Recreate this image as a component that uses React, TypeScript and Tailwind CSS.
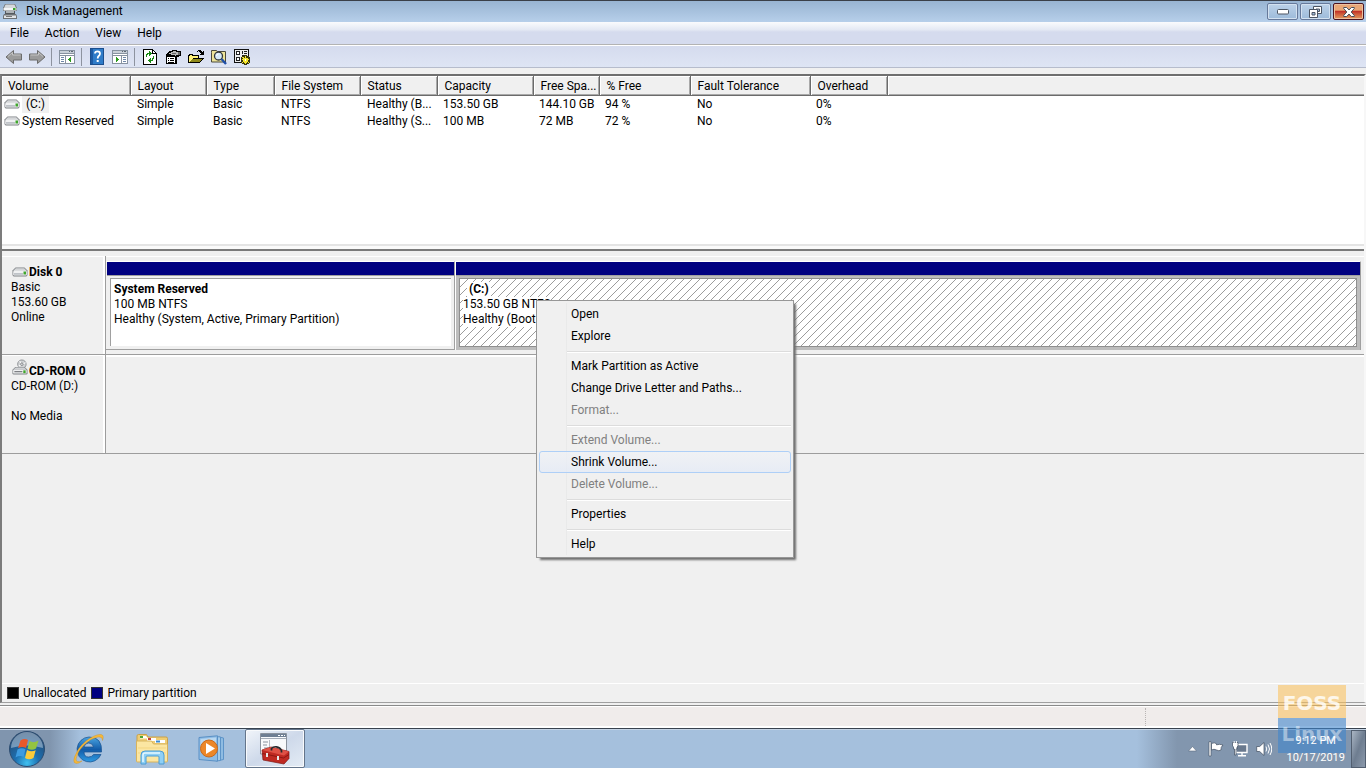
import React from "react";
import clsx from "clsx";

interface Volume {
  name: string;
  layout: string;
  type: string;
  fs: string;
  status: string;
  capacity: string;
  free: string;
  percent: string;
  fault: string;
  overhead: string;
  selected?: boolean;
}

const columns = [
  { title: "Volume", width: "w-[128px]" },
  { title: "Layout", width: "w-[76px]" },
  { title: "Type", width: "w-[68px]" },
  { title: "File System", width: "w-[86px]" },
  { title: "Status", width: "w-[77px]" },
  { title: "Capacity", width: "w-[96px]" },
  { title: "Free Spa...", width: "w-[66px]" },
  { title: "% Free", width: "w-[91px]" },
  { title: "Fault Tolerance", width: "w-[120px]" },
  { title: "Overhead", width: "w-[77px]" },
];

const volumes: Volume[] = [
  {
    name: "(C:)",
    layout: "Simple",
    type: "Basic",
    fs: "NTFS",
    status: "Healthy (B...",
    capacity: "153.50 GB",
    free: "144.10 GB",
    percent: "94 %",
    fault: "No",
    overhead: "0%",
    selected: true,
  },
  {
    name: "System Reserved",
    layout: "Simple",
    type: "Basic",
    fs: "NTFS",
    status: "Healthy (S...",
    capacity: "100 MB",
    free: "72 MB",
    percent: "72 %",
    fault: "No",
    overhead: "0%",
  },
];

const menuGroups = [
  [{ label: "Open" }, { label: "Explore" }],
  [
    { label: "Mark Partition as Active" },
    { label: "Change Drive Letter and Paths..." },
    { label: "Format...", disabled: true },
  ],
  [
    { label: "Extend Volume...", disabled: true },
    { label: "Shrink Volume...", active: true },
    { label: "Delete Volume...", disabled: true },
  ],
  [{ label: "Properties" }],
  [{ label: "Help" }],
];

function DriveIcon() {
  return (
    <svg width="16" height="10" viewBox="0 0 16 10" className="shrink-0">
      <path d="M3.5 .5h9L15.5 3.5v4q0 2-1.500 2H2Q.5 9.500 .5 7.500v-4z" fill="#7f8286" />
      <path d="M3.800 1.200h8.400L14.800 4H1.200z" fill="#d4d6d8" />
      <rect x="1.200" y="3.800" width="13.600" height="4.600" rx="1.200" fill="#f0f1f2" />
      <rect x="2" y="6" width="9" height="1.800" fill="#bfc3c8" />
      <rect x="11.500" y="4.500" width="2.500" height="3" fill="#3fa62c" />
    </svg>
  );
}

function CdRomIcon() {
  return (
    <svg width="16" height="17" viewBox="0 0 17 17" className="shrink-0">
      <circle cx="10.500" cy="5" r="4.500" fill="#d0d2d4" stroke="#8d9093" />
      <path d="M10.500 5 8 1.500M10.500 5l4-1.500M10.500 5 7 7" stroke="#fff" />
      <circle cx="10.500" cy="5" r="1.300" fill="#fff" stroke="#777a7d" />
      <path d="M3.500 8h10l3 3v3.500q0 1.500-1.500 1.500H2q-1.500 0-1.500-1.500V11z" fill="#7f8286" />
      <path d="M4 8.500h9l2.500 2.500H1.300z" fill="#d0d2d4" />
      <rect x="1.200" y="11" width="14.400" height="4" rx="1" fill="#eff0f1" />
      <rect x="2.500" y="12.500" width="8.500" height="1" fill="#55585c" />
      <rect x="12" y="11.500" width="2.500" height="3" fill="#3fa62c" />
    </svg>
  );
}

function AppIcon() {
  return (
    <svg width="16" height="17" viewBox="0 0 16 17" className="shrink-0">
      <path d="M3 1h10l2 4v3H1V5z" fill="#6d7175" />
      <path d="M3.500 1.500h9L14 5H2z" fill="#d6d9dc" />
      <rect x="1.500" y="5" width="13" height="2.500" fill="#f4f5f6" />
      <rect x="11" y="5" width="2.500" height="2" fill="#36a52a" />
      <path d="M3 8h10v3H3z" fill="#55595d" />
      <path d="M4 8h8v2H4z" fill="#aeb3b7" />
      <path d="M2 11h12l1 2v3H1v-3z" fill="#6d7175" />
      <rect x="2" y="12.500" width="12" height="2.500" fill="#e3e5e7" />
      <rect x="4" y="13" width="6" height="1" fill="#777" />
    </svg>
  );
}

function ArrowIcon({ flip }: { flip?: boolean }) {
  return (
    <svg width="18" height="16" viewBox="0 0 18 16" className={clsx(flip && "-scale-x-100")}>
      <path d="M1 8 8.500 1.500V5H16.500v6H8.500v3.500z" fill="#9b9b9b" stroke="#6c6c6c" />
      <path d="M3 7.500 7.500 3.500V6H15.500" fill="none" stroke="#c4c4c4" />
    </svg>
  );
}

// Console window with the tree pane on the left or the action pane on the right
function PaneIcon({ action }: { action?: boolean }) {
  return (
    <svg width="16" height="14" viewBox="0 0 16 14" shapeRendering="crispEdges">
      <path d="M0 0h16v14H0z" fill="#8792a0" />
      <path d="M1 1h14v2H1z" fill="#c9d0d8" />
      <path d="M10 1h1v1h-1zM12 1h2v1h-2z" fill="#5d6874" />
      <path d="M1 4h14v1H1z" fill="#fff" />
      {action ? (
        <>
          <path d="M1 6h8v7H1zM10 6h5v7h-5z" fill="#fff" />
          <path d="M11 7h3v1h-3zM11 9h3v1h-3zM11 11h3v1h-3z" fill="#6f87a8" />
          <path d="M4 7h1v1h1v1h1v1H6v1H5v1H4z" fill="#2c9a1c" />
        </>
      ) : (
        <>
          <path d="M1 6h5v7H1zM7 6h8v7H7z" fill="#fff" />
          <path d="M2 7h3v1H2zM2 9h3v1H2zM2 11h3v1H2z" fill="#6f87a8" />
          <path d="M12 7h-1v1h-1v1H9v1h1v1h1v1h1z" fill="#2c9a1c" />
        </>
      )}
    </svg>
  );
}

function HelpIcon() {
  return (
    <svg width="14" height="17" viewBox="0 0 14 17">
      <rect x=".5" y=".5" width="13" height="16" fill="#2f7cc9" stroke="#1c4f8e" />
      <path d="M1 1h2v15H1z" fill="#1d5ba5" />
      <path d="M5 5.500Q5 3.300 7.500 3.300T10 5.700Q10 7 8.700 8 7.700 8.800 7.700 10.500" fill="none" stroke="#fff" strokeWidth="1.800" />
      <rect x="6.700" y="12" width="2" height="2" fill="#fff" />
    </svg>
  );
}

function RefreshIcon() {
  return (
    <svg width="14" height="16" viewBox="0 0 14 16" shapeRendering="crispEdges">
      <path d="M0 0h10v1h1v1h1v1h1v1h1v12H0z" fill="#000" />
      <path d="M1 1h8v4h4v10H1z" fill="#fff" />
      <path d="M10 2v2h2V3h-1V2z" fill="#fff" />
      <path d="M3 8V5h1V4h2V2h1v1h1v1h1v1H8v1H7v1H6V5H5v1H4v2zM10 7h1v3h-1v2H8v2H7v-1H6v-1H5v-1h1v-1h1V9h1v2h1V9h1z" fill="#178a13" />
    </svg>
  );
}

function PropertiesIcon() {
  return (
    <svg width="16" height="16" viewBox="0 0 16 16" shapeRendering="crispEdges">
      <path d="M1 5h11v10H1z" fill="#000" />
      <path d="M2 8h8v6H2z" fill="#fff" />
      <path d="M3 9h1v1H3zM5 9h4v1H5zM3 11h1v1H3zM5 11h4v1H5zM3 13h6v1H3z" fill="#000" />
      <path d="M1 5h1V4h1V3h1V2h3V1h5v1h4v5h-2v1h-2v1h-1V8H9V7H5V6H1z" fill="#000" />
      <path d="M4 4h2V3h2V2h3v1h2v3h-2v1h-1V6H6V5H4z" fill="#b9b9b9" />
      <path d="M7 4h4v1H7zM13 3h2v3h-2z" fill="#666" />
    </svg>
  );
}

function OpenIcon() {
  return (
    <svg width="16" height="14" viewBox="0 0 16 14" shapeRendering="crispEdges">
      <path d="M9 1h1V0h3v1h1v1h1V1h1v4h-4V4h1V3h-1V2h-1V1h-1v1H9z" fill="#000" />
      <path d="M0 5h1V4h4v1h6v3h5v1h-1v1h-1v1h-1v1h-1v1H0z" fill="#000" />
      <path d="M1 6h1V5h2v1h6v2H5v1H4v1H3v1H2v1H1z" fill="#fff27a" />
      <path d="M5 9h9v1h-1v1h-1v1H2v-1h1v-1h1V9z" fill="#8f8a1c" />
    </svg>
  );
}

function FindIcon() {
  return (
    <svg width="16" height="16" viewBox="0 0 16 16">
      <path d="M.5 3.500V1.500h5l1 1h8v10.500H.5z" fill="#eee49a" stroke="#4b4a3c" />
      <circle cx="7.500" cy="7" r="4" fill="#d5e9f8" stroke="#34383c" strokeWidth="1.300" />
      <path d="M5.500 7q0-2 2-2" fill="none" stroke="#fff" />
      <path d="m10.500 10 4.500 5" stroke="#1f4fa8" strokeWidth="2.400" />
    </svg>
  );
}

function SettingsIcon() {
  return (
    <svg width="16" height="16" viewBox="0 0 16 16" shapeRendering="crispEdges">
      <path d="M0 0h15v14H0z" fill="#111" />
      <path d="M1 1h13v12H1z" fill="#eee" />
      <path d="M2 2h4v4H2zM2 8h4v4H2zM8 2h1v3H8zM10 2h3v1h-3zM10 4h3v1h-3zM8 6h5v1H8z" fill="#222" />
      <path d="M3 3h2v2H3zM3 9h2v2H3z" fill="#fff" />
      <path d="M10 6h3v1h2v1h1v6h-1v1h-2v1h-3v-1H8v-1H7V8h1V7h2z" fill="#3a380a" />
      <path d="M11 7h1v2h2v1h1v1h-1v2h1v1h-1v-1h-1v1h-1v1h-1v-1h-1v-1H9v1H8v-1h1v-2H8v-1h1V9H8V8h2v1h1z" fill="#f5e52c" />
      <path d="M10 9h3v1h1v2h-1v1h-3v-1H9v-2h1z" fill="#f5e52c" />
      <path d="M11 10h1v2h-1z" fill="#fff" />
    </svg>
  );
}

function ToolButton({ label, children }: { label: string; children: React.ReactNode }) {
  return (
    <button type="button" aria-label={label} className="flex h-5 w-[23px] items-center justify-center">
      {children}
    </button>
  );
}

function ToolSeparator() {
  return <span className="mx-[3px] h-[18px] w-px bg-[#8d939f]" />;
}

function TitleBar() {
  const frame = "flex h-[17px] w-[31px] items-center justify-center rounded-[2px] border shadow-[inset_0_0_0_1px_#d3e1f0]";
  return (
    <header className="flex h-[22px] items-center border-t border-[#3a3f48] bg-linear-to-b from-[#98b4d2] to-[#b7cfea] pl-[2px] pr-[2px]">
      <AppIcon />
      <h1 className="ml-2 flex-1 text-[12px]">Disk Management</h1>
      <div className="flex gap-[2px]">
        <button type="button" aria-label="Minimize" className={clsx(frame, "border-[#66799a] bg-linear-to-b from-[#bcd1e8] to-[#9dbbda]")}>
          <svg width="12" height="6" viewBox="0 0 12 6">
            <rect x=".5" y=".5" width="11" height="4.500" rx="1" fill="#fff" stroke="#4c5563" />
          </svg>
        </button>
        <button type="button" aria-label="Restore" className={clsx(frame, "border-[#66799a] bg-linear-to-b from-[#bcd1e8] to-[#9dbbda]")}>
          <svg width="13" height="12" viewBox="0 0 13 12">
            <path d="M4.500.5h8v7h-8z" fill="#fff" stroke="#4c5563" />
            <path d="M7 3h3.500v2.500H7z" fill="#9dbbda" stroke="#4c5563" />
            <path d="M.5 3.500h8v8h-8z" fill="#fff" stroke="#4c5563" />
            <path d="M3 6.500h3v2.500H3z" fill="#9dbbda" stroke="#4c5563" />
          </svg>
        </button>
        <button
          type="button"
          aria-label="Close"
          className="flex h-[17px] w-[31px] items-center justify-center rounded-[2px] border border-[#4b1420] bg-linear-to-b from-[#e8a777] from-40% via-[#c3342a] via-50% to-[#e19a5f] shadow-[inset_0_0_0_1px_#ecc0a0]"
        >
          <svg width="12" height="10" viewBox="0 0 12 10">
            <path d="M.7.5h3L6 3 8.300.5h3v1L8.200 5l3.100 3.500v1h-3L6 7 3.700 9.500h-3v-1L3.800 5 .7 1.500z" fill="#fff" stroke="#4a4f5a" />
          </svg>
        </button>
      </div>
    </header>
  );
}

function MenuBar() {
  return (
    <nav className="flex h-[23px] items-center gap-[16px] border-b border-[#b3b3b3] bg-linear-to-b from-[#fafbfd] from-0% via-[#e4e9f4] via-35% to-[#d5dbee] to-45% pl-[10px]">
      {["File", "Action", "View", "Help"].map((item) => (
        <button key={item} type="button">
          {item}
        </button>
      ))}
    </nav>
  );
}

function Toolbar() {
  return (
    <div className="flex h-[23px] items-center border-b border-t border-b-[#b6bccc] border-t-white bg-linear-to-b from-[#d5dbee] to-[#dee5f4] pl-[2px]">
      <ToolButton label="Back"><ArrowIcon /></ToolButton>
      <ToolButton label="Forward"><ArrowIcon flip /></ToolButton>
      <ToolSeparator />
      <ToolButton label="Show/Hide Console Tree"><PaneIcon /></ToolButton>
      <ToolSeparator />
      <ToolButton label="Help"><HelpIcon /></ToolButton>
      <ToolButton label="Show/Hide Action Pane"><PaneIcon action /></ToolButton>
      <ToolSeparator />
      <ToolButton label="Refresh"><RefreshIcon /></ToolButton>
      <ToolButton label="Properties"><PropertiesIcon /></ToolButton>
      <ToolButton label="Open"><OpenIcon /></ToolButton>
      <ToolButton label="Find"><FindIcon /></ToolButton>
      <ToolButton label="Settings"><SettingsIcon /></ToolButton>
    </div>
  );
}

function VolumeTable() {
  return (
    <section className="h-[168px] bg-white">
      <table className="w-full table-fixed border-collapse text-left">
        <thead>
          <tr className="h-[19px] bg-[#f0f0f0]">
            {columns.map((col, index) => (
              <th
                key={col.title}
                className={clsx(
                  col.width,
                  index === 0 ? "pl-[6px]" : "pl-[7px]",
                  "overflow-hidden whitespace-nowrap border-b border-r border-[#6b6b6b] pt-[2px] font-normal leading-4 shadow-[inset_1px_1px_0_#fff,inset_-1px_-1px_0_#a9a9a9]"
                )}
              >
                {col.title}
              </th>
            ))}
            <td className="border-b border-[#6b6b6b] shadow-[inset_1px_1px_0_#fff,inset_0_-1px_0_#a9a9a9]" />
          </tr>
        </thead>
        <tbody>
          {volumes.map((v) => (
            <tr key={v.name} className="h-[17px] whitespace-nowrap leading-[17px]">
              <td>
                <div className="flex items-center pl-[2px]">
                  <DriveIcon />
                  <span className={clsx("ml-[2px]", v.selected && "bg-[#f0f0f0] px-[4px]")}>{v.name}</span>
                </div>
              </td>
              <td className="pl-[7px]">{v.layout}</td>
              <td className="pl-[7px]">{v.type}</td>
              <td className="pl-[7px]">{v.fs}</td>
              <td className="pl-[7px]">{v.status}</td>
              <td className="pl-[6px]">{v.capacity}</td>
              <td className="pl-[6px]">{v.free}</td>
              <td className="pl-[6px]">{v.percent}</td>
              <td className="pl-[7px]">{v.fault}</td>
              <td className="pl-[6px]">{v.overhead}</td>
              <td />
            </tr>
          ))}
        </tbody>
      </table>
    </section>
  );
}

function DiskLabel({ icon, name, lines }: { icon: React.ReactNode; name: string; lines: string[] }) {
  return (
    <div className="w-[104px] shrink-0 border-b border-r border-[#9d9d9d] pl-[9px] shadow-[inset_-2px_1px_0_#fff]">
      <div className="flex h-[24px] items-end gap-px pl-px">
        <span className="pb-[3px]">{icon}</span>
        <b>{name}</b>
      </div>
      {lines.map((line, index) => (
        <p key={index} className="h-[15px]">
          {line}
        </p>
      ))}
    </div>
  );
}

function Hatch() {
  return (
    <svg className="absolute inset-0 h-full w-full" shapeRendering="crispEdges">
      <defs>
        <pattern id="hatch" width="8" height="8" patternUnits="userSpaceOnUse">
          <path d="M0 7h1v1H0zM1 6h1v1H1zM2 5h1v1H2zM3 4h1v1H3zM4 3h1v1H4zM5 2h1v1H5zM6 1h1v1H6zM7 0h1v1H7z" fill="#9c9c9c" />
        </pattern>
      </defs>
      <rect width="100%" height="100%" fill="url(#hatch)" />
    </svg>
  );
}

function Disks() {
  return (
    <section className="flex-1 bg-[#f0f0f0] pt-[5px]">
      <div className="flex h-[99px]">
        <DiskLabel icon={<DriveIcon />} name="Disk 0" lines={["Basic", "153.60 GB", "Online"]} />
        <div className="flex min-w-0 flex-1 border-b border-[#9d9d9d] pb-[4px] pr-[3px] pt-[5px] shadow-[inset_0_1px_0_#fff]">
          <div className="flex w-[349px] shrink-0 flex-col border-b border-r border-[#a0a0a0] border-t border-t-white">
            <div className="ml-px h-[14px] border-b border-[#a0a0a0] bg-[#000080]" />
            <div className="flex-1 p-[3px] pl-[4px] pt-[2px]">
              <div className="h-full border-l border-t border-[#a0a0a0] bg-white pl-[3px] pt-[3px] leading-[15px]">
                <b className="block">System Reserved</b>
                <p>100 MB NTFS</p>
                <p>Healthy (System, Active, Primary Partition)</p>
              </div>
            </div>
          </div>
          <div className="flex min-w-0 flex-1 flex-col border-l border-r border-t border-l-white border-r-[#a0a0a0] border-t-white">
            <div className="h-[14px] border-b border-[#a0a0a0] bg-[#000080]" />
            <div className="flex-1 bg-[#bdbdbd] p-[3px] pt-[2px]">
              <div className="relative h-full border border-[#8f8f8f] bg-white pl-[3px] pt-[3px] leading-[15px]">
                <Hatch />
                <div className="relative flex flex-col items-start whitespace-nowrap">
                  <b className="ml-[4px] bg-white px-[2px]">(C:)</b>
                  <p className="bg-white">153.50 GB NTFS</p>
                  <p className="bg-white">Healthy (Boot</p>
                </div>
              </div>
            </div>
          </div>
        </div>
      </div>
      <div className="flex h-[99px]">
        <DiskLabel icon={<CdRomIcon />} name="CD-ROM 0" lines={["CD-ROM (D:)", "", "No Media"]} />
        <div className="flex-1 border-b border-[#9d9d9d] shadow-[inset_0_2px_0_#fff]" />
      </div>
    </section>
  );
}

function Legend() {
  return (
    <div className="flex h-[19px] items-center border-t border-white bg-[#f0f0f0] pl-[5px]">
      <span className="mr-1 h-3 w-3 border border-[#333] bg-black" />
      <span className="mr-[5px]">Unallocated</span>
      <span className="mr-1 h-3 w-3 border border-[#333] bg-[#000080]" />
      <span>Primary partition</span>
    </div>
  );
}

function ContextMenu() {
  return (
    <div
      role="menu"
      className="absolute left-[536px] top-[300px] w-[258px] border border-[#979797] bg-[#f0f0f0] p-[2px] shadow-[3px_3px_2px_-1px_#6f6f6f]"
    >
      <div className="bg-linear-to-r from-transparent from-[27px] via-[#e2e3e3] via-[27px] to-transparent to-[28px]">
        {menuGroups.map((group, index) => (
          <div key={index}>
            {index > 0 && <div className="mb-[2px] ml-7 mt-[4px] h-[2px] border-b border-t border-b-white border-t-[#dcdcdc]" />}
            {group.map((item) => (
              <button
                key={item.label}
                type="button"
                role="menuitem"
                disabled={item.disabled}
                className={clsx(
                  "block h-[22px] w-full rounded-[3px] border pl-[31px] text-left",
                  item.active ? "border-[#aecff7] bg-linear-to-b from-[#f0f2f6]/70 to-[#e3eaf7]/70" : "border-transparent",
                  item.disabled && "text-[#808080]"
                )}
              >
                {item.label}
              </button>
            ))}
          </div>
        ))}
      </div>
    </div>
  );
}

function StartOrb() {
  return (
    <svg width="38" height="38" viewBox="0 0 38 38">
      <defs>
        <radialGradient id="orb" cx="50%" cy="90%" r="85%">
          <stop offset="0" stopColor="#3fc0f0" />
          <stop offset=".4" stopColor="#1d6fb0" />
          <stop offset="1" stopColor="#27496f" />
        </radialGradient>
      </defs>
      <circle cx="19" cy="19" r="17.500" fill="url(#orb)" stroke="#2c4c70" />
      <path d="M3 18A16 16 0 0 1 35 18Q19 13 3 18z" fill="#c6d7e8" opacity=".5" />
      <path d="M12.500 10.500q4-2.500 7.500-.5L18 18q-3.500-2-8 0z" fill="#e8582b" />
      <path d="M21.500 11q4 2.500 9-.5L28 18.500q-4 2.500-8.500 0z" fill="#93c440" />
      <path d="M9.500 19.500q4-2.500 8-.3L15.500 27q-3.500-2-8 .5z" fill="#3d9be0" />
      <path d="M19 20q4.500 2.500 8.700.2L25.500 28q-4.500 2.500-8.500 0z" fill="#fccb3a" />
    </svg>
  );
}

function ExplorerEIcon() {
  return (
    <svg width="34" height="34" viewBox="0 0 34 34">
      <defs>
        <linearGradient id="ie" x1="0" y1="0" x2="0" y2="1">
          <stop offset="0" stopColor="#4aa5e2" />
          <stop offset=".5" stopColor="#125ba8" />
          <stop offset="1" stopColor="#2f9be2" />
        </linearGradient>
      </defs>
      <path
        d="M18 5A12.500 12.500 0 1 0 30 22.500H22.500q-1.500 2.500-5 2.500-4.500 0-4.500-5h17.500Q31.500 5 18 5zM13 15q.8-4 4.700-4t4.800 4z"
        fill="url(#ie)"
        stroke="#174f8c"
        strokeWidth=".7"
      />
      <path d="M8 31Q1 33 3.500 25 6.500 16 15 9 24 2 30 2.500q3.500.5 1.500 6 0-4-4.500-3.500-7 1-14 8T5 27q0 4 6 2z" fill="#f4b93c" stroke="#cf8e1f" strokeWidth=".4" />
    </svg>
  );
}

function FolderIcon() {
  return (
    <svg width="34" height="32" viewBox="0 0 34 32">
      <path d="M2 3q0-1.500 1.500-1.500h8L13 4h18q1.500 0 1.500 1.500V27H2z" fill="#efce75" stroke="#c9a14a" />
      <path d="M5 3h6l2 2.500H5z" fill="#fff" />
      <path d="M5 3h3v2H5z" fill="#4aa537" />
      <path d="M12 5h9v3h-9z" fill="#fff" />
      <path d="M13 5h3v2h-3z" fill="#c6413a" />
      <path d="M1.500 8h15l2 3h14v17q0 1-1 1H2.500q-1 0-1-1z" fill="#fbe6a2" stroke="#d7b35d" />
      <path d="M20 7h10v3H20z" fill="#fff" />
      <path d="M21 7.500h4v2h-4z" fill="#3a8bd0" />
      <path d="M3 15h28M3 20h28" stroke="#f3d581" />
      <path d="M6 31V22q0-4 4-4h15q4 0 4 4v9h-5v-7q0-1-1-1H12q-1 0-1 1v7z" fill="#8fd0f5" stroke="#4a9cd4" />
      <path d="M8 29v-7q0-2 2-2h15" fill="none" stroke="#e5f7ff" strokeWidth="1.500" />
    </svg>
  );
}

function PlayerIcon() {
  return (
    <svg width="28" height="28" viewBox="0 0 28 28">
      <path d="m21 2 4.500 1v21.500l-4.500 1z" fill="#8fbce2" stroke="#5d94c8" />
      <path d="m18 1.500 4.500.5v23.500l-4.500.5z" fill="#a4cbea" stroke="#5d94c8" />
      <path d="M1 2.500 19.500.8v25.400L1 24.500z" fill="#8ebce5" stroke="#5a90c5" />
      <path d="M2.500 4 18 2.500V12L2.500 14z" fill="#b9d8f1" />
      <circle cx="11" cy="13.500" r="8.500" fill="#ec8728" stroke="#c9691a" />
      <path d="m8 8 9 5.500L8 19z" fill="#fff" />
    </svg>
  );
}

function ToolboxIcon() {
  return (
    <svg width="32" height="34" viewBox="0 0 32 34">
      <path d="M1.500 1.500h26V22h-26z" fill="#f8f9fb" stroke="#8a929d" />
      <path d="M2 2h25v3H2z" fill="#6f7f93" />
      <path d="M2 6.500h25" stroke="#a5adb8" />
      <path d="M19 3.500h2M22 3.500h2M25 3.500h1" stroke="#fff" />
      <path d="M4 10h5M4 13h4M5 16h4" stroke="#8a929d" />
      <path d="M10.500 8v9" stroke="#b4bac3" />
      <path d="m3 18 9-3 18 4.500v7l-5 5.500L4 28z" fill="#bf2a22" stroke="#801512" strokeWidth=".7" />
      <path d="m3 18 9-3 18 4.500-5 4z" fill="#df5145" />
      <path d="M12.500 18.500v-2q1.500-2 5-1.700t5 3.700v2" fill="none" stroke="#28292c" strokeWidth="1.700" />
      <path d="m3.500 21.500 21 4.500L30 22.500" fill="none" stroke="#8d1712" />
      <path d="M8 21v4M19 24v4" stroke="#e7e7e7" strokeWidth="2" />
    </svg>
  );
}

function Taskbar() {
  return (
    <footer className="flex h-10 items-center border-t border-[#39434f] bg-linear-to-r from-[#8095ae] from-[50px] via-[#a5c0dd] via-[80px] to-[#a5c0dd] shadow-[inset_0_1px_0_#c6d5e6]">
      <button type="button" aria-label="Start" className="flex w-[54px] justify-center"><StartOrb /></button>
      <button type="button" aria-label="Internet Explorer" className="ml-1 flex w-[60px] justify-center"><ExplorerEIcon /></button>
      <button type="button" aria-label="Windows Explorer" className="ml-1 flex w-[60px] justify-center"><FolderIcon /></button>
      <button type="button" aria-label="Media Player" className="flex w-[60px] justify-center"><PlayerIcon /></button>
      <button
        type="button"
        aria-label="Disk Management"
        className="ml-[3px] flex h-[39px] w-[60px] items-center justify-center rounded-[2px] border border-[#64758b] bg-linear-to-br from-[#f1f5fa] via-[#ced9ea] to-[#e4ecf5] shadow-[inset_0_0_0_1px_#f8fafc]"
      >
        <ToolboxIcon />
      </button>
      <div className="ml-auto flex h-[38px] items-center bg-linear-to-r from-[#a5c0dd] to-[#8296ae] to-[40px] pl-[47px]">
        <button type="button" aria-label="Show hidden icons" className="flex w-4 justify-center">
          <svg width="9" height="6" viewBox="0 0 9 6"><path d="M4.500.5 8.500 5H.5z" fill="#fff" stroke="#5d6c80" strokeWidth=".6" /></svg>
        </button>
        <button type="button" aria-label="Action Center" className="ml-2 flex w-4 justify-center">
          <svg width="16" height="16" viewBox="0 0 16 16">
            <path d="M1 .7h2V15H1z" fill="#fff" stroke="#3c4a5d" strokeWidth=".6" />
            <path d="M3.500 2.500q3-1.500 5 .3v1q3-1 6.500.2-2.500 2-2 5-2 1.500-4.500 0Q6 7.500 3.500 9z" fill="#fff" stroke="#3c4a5d" strokeWidth=".7" />
          </svg>
        </button>
        <button type="button" aria-label="Network" className="ml-2 flex w-4 justify-center">
          <svg width="16" height="16" viewBox="0 0 16 16">
            <path d="M4 3.500h11v8H4z" fill="#69798e" stroke="#fff" strokeWidth="1.400" />
            <path d="M10 12v2.500M6 14.800h8" stroke="#fff" strokeWidth="1.400" />
            <path d="M.5 1.500h5.500V5l-1 1v2H4v6H2.500V8h-1V6l-1-1z" fill="#fff" stroke="#3c4a5d" strokeWidth=".7" />
            <path d="M2.200 0v2M4.400 0v2" stroke="#fff" />
          </svg>
        </button>
        <button type="button" aria-label="Volume" className="ml-2 flex w-4 justify-center">
          <svg width="16" height="16" viewBox="0 0 16 16">
            <path d="M.7 5.500h3L8 1.500v13l-4.300-4h-3z" fill="#fff" stroke="#3c4a5d" strokeWidth=".7" />
            <path d="M10 5.500q1.500 2.500 0 5M12 3.500q3 4.500 0 9M14 2q3.500 6 0 12" fill="none" stroke="#fff" />
          </svg>
        </button>
        <div className="relative z-10 ml-[14px] text-center text-[11px] leading-[17px] text-white">
          <p>9:12 PM</p>
          <p>10/17/2019</p>
        </div>
        <button
          type="button"
          aria-label="Show desktop"
          className="ml-[6px] h-[38px] w-[15px] border border-[#525f70] bg-linear-to-br from-[#aab6c4] via-[#6e7d90] to-[#8c9aac]"
        />
      </div>
    </footer>
  );
}

function Watermark() {
  return (
    <div className="pointer-events-none absolute bottom-[15px] right-5 w-[68px] text-center font-['DejaVu_Sans'] text-[20px] font-bold">
      <p className="h-[33px] bg-[#fbbf55]/55 leading-9 text-white/80">FOSS</p>
      <p className="h-[35px] bg-[#3f86cb]/60 leading-8 text-white/45">Linux</p>
    </div>
  );
}

export default function App() {
  return (
    <div className="relative flex min-h-screen flex-col overflow-hidden bg-[#f0f0f0] font-['Roboto','Liberation_Sans',sans-serif] text-[12px] leading-[15px] text-black">
      <TitleBar />
      <MenuBar />
      <Toolbar />
      <main className="mt-[6px] flex flex-1 flex-col border-b border-l-2 border-r-2 border-t-2 border-b-[#a0a0a0] border-l-[#7c7c7c] border-r-[#f7f7f7] border-t-[#6f6f6f]">
        <VolumeTable />
        <div className="h-[7px] border-b-2 border-t-2 border-b-[#7a7a7a] border-t-[#e4e4e4] bg-[#fafafa]" />
        <Disks />
        <Legend />
      </main>
      <div className="mt-[2px] flex h-[23px] justify-end border-b-2 border-t border-b-white border-t-[#8a8a8a] bg-[#f0eceb] shadow-[inset_0_1px_0_#fff]">
        <span className="mr-[220px] mt-[2px] border-l border-dotted border-[#b9b5b4]" />
      </div>
      <Taskbar />
      <Watermark />
      <ContextMenu />
    </div>
  );
}
